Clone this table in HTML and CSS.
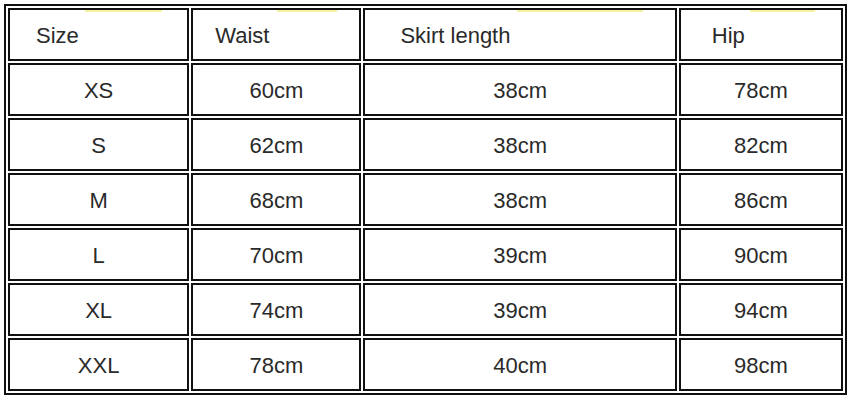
FILE: index.html
```html
<!DOCTYPE html>
<html>
<head>
<meta charset="utf-8">
<link rel="stylesheet" href="styles.css">
</head>
<body>
<table class="size-table">
  <colgroup>
    <col class="c1"><col class="c2"><col class="c3"><col class="c4">
  </colgroup>
  <tr class="head">
    <td><span class="mark m1"></span>Size</td>
    <td><span class="mark m2"></span>Waist</td>
    <td><span class="mark m3"></span>Skirt length</td>
    <td><span class="mark m4"></span>Hip</td>
  </tr>
  <tr><td>XS</td><td>60cm</td><td>38cm</td><td>78cm</td></tr>
  <tr><td>S</td><td>62cm</td><td>38cm</td><td>82cm</td></tr>
  <tr><td>M</td><td>68cm</td><td>38cm</td><td>86cm</td></tr>
  <tr><td>L</td><td>70cm</td><td>39cm</td><td>90cm</td></tr>
  <tr><td>XL</td><td>74cm</td><td>39cm</td><td>94cm</td></tr>
  <tr><td>XXL</td><td>78cm</td><td>40cm</td><td>98cm</td></tr>
</table>
</body>
</html>
```

FILE: styles.css
```css
html, body {
  margin: 0;
  padding: 0;
  background: #fff;
}
body {
  padding: 4px;
  font-family: "Liberation Sans", Arial, sans-serif;
}
.size-table {
  border: 2px solid #111;
  border-collapse: separate;
  border-spacing: 2px;
  table-layout: fixed;
  width: 843px;
}
.c1 { width: 181px; }
.c2 { width: 170px; }
.c3 { width: 313px; }
.c4 { width: 164px; }
.size-table td {
  box-sizing: border-box;
  height: 53px;
  border: 2px solid #111;
  padding: 2px 0 0 0;
  font-size: 22px;
  color: #2a2a2a;
  text-align: center;
  vertical-align: middle;
  position: relative;
}
.head td {
  text-align: left;
}
.head td:nth-child(1) { padding-left: 26px; }
.head td:nth-child(2) { padding-left: 22px; }
.head td:nth-child(3) { padding-left: 35px; }
.head td:nth-child(4) { padding-left: 31px; }
.mark {
  position: absolute;
  top: 0;
  height: 2px;
  background: #f4f08a;
  opacity: 0.8;
}
.m1 { left: 75px; width: 77px; }
.m2 { left: 84px; width: 60px; }
.m3 { left: 152px; width: 126px; }
.m4 { left: 69px; width: 65px; }
```
